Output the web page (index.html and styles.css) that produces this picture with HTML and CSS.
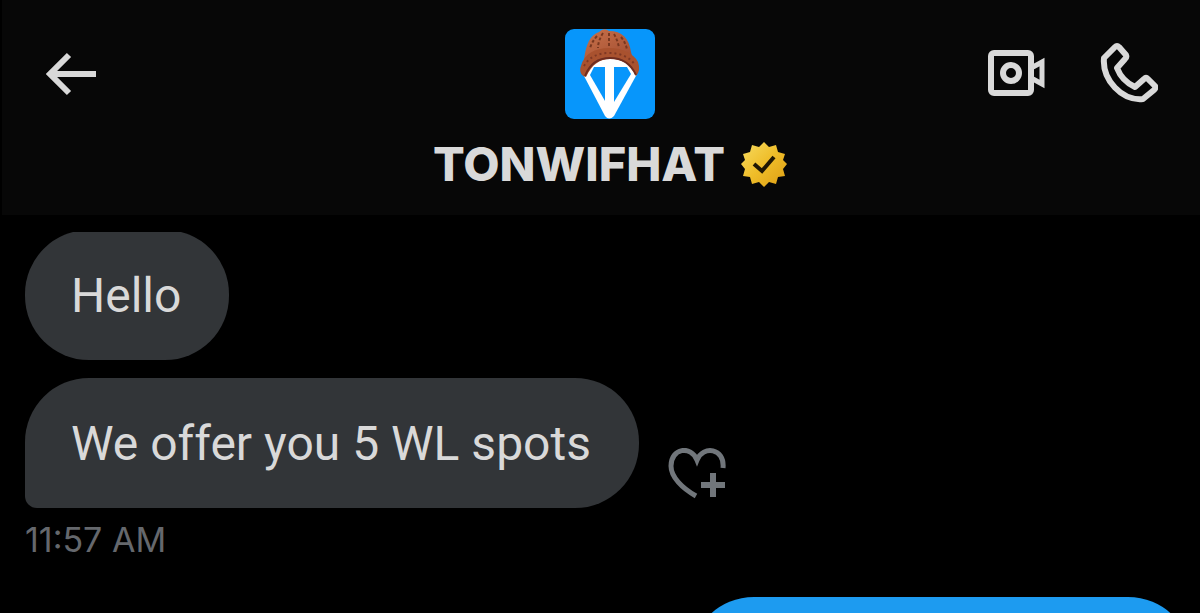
FILE: index.html
```html
<!DOCTYPE html>
<html lang="en">
<head>
  <meta charset="UTF-8">
  <meta name="viewport" content="width=device-width, initial-scale=1">
  <title>TONWIFHAT</title>
  <link rel="stylesheet" href="styles.css">
</head>
<body>
  <!-- Top bar -->
  <header class="topbar">
    <button class="icon-btn back" type="button" aria-label="Back">
      <svg width="52" height="44" viewBox="0 0 52 44" fill="none" stroke="currentColor" stroke-width="6">
        <path d="M23 3 4 22l19 19M4 22h46"/>
      </svg>
    </button>

    <div class="profile">
      <svg class="avatar" width="92" height="92" viewBox="0 0 92 92" aria-hidden="true">
        <defs>
          <linearGradient id="wool" x1="0" y1="0" x2="1" y2="1">
            <stop offset="0" stop-color="#c9724b"/>
            <stop offset="1" stop-color="#a14c30"/>
          </linearGradient>
        </defs>
        <rect x="1" y="1" width="90" height="90" rx="9" fill="#0796fb"/>
        <path d="M20 48C24 22 66 22 73 46L50 88q-5 5-9 0Z" fill="#fff"/>
        <path d="M30 39h11v34L26 47Z" fill="#0796fb"/>
        <path d="M50 39h13l4 7-17 28Z" fill="#0796fb"/>
        <path d="M20 32C22 16 26 7 35 4q5-5 10-1c13 0 20 7 22 21l2 8Q46 24 20 32Z" fill="url(#wool)"/>
        <path d="M33 8q-6 7-7 13M39 5q-5 8-5 15M45 5v14M50 6q4 7 5 14M57 9q5 6 6 13" fill="none" stroke="#78371f" stroke-width="2" stroke-dasharray="3 2"/>
        <path d="M17 38c3-12 14-18 28-18s25 6 29 14q3 9-2 14C66 34 56 31 46 31S28 36 22 49c-5-1-7-6-5-11Z" fill="#a9522f"/>
        <path d="M20 38c5-9 14-13 25-13s21 4 26 12" fill="none" stroke="#7f3824" stroke-width="2" stroke-dasharray="2 3"/>
        <path d="M21 48c5-13 14-18 25-18s20 4 26 17" fill="none" stroke="#6f2d20" stroke-width="2"/>
      </svg>
      <h1 class="name">
        TONWIFHAT
        <svg width="46" height="46" viewBox="0 0 46 46" role="img" aria-label="Verified">
          <defs>
            <linearGradient id="gold" x1="0" y1="0" x2="1" y2="1">
              <stop offset="0" stop-color="#f6dc62"/>
              <stop offset=".5" stop-color="#efbd29"/>
              <stop offset="1" stop-color="#dc9d13"/>
            </linearGradient>
          </defs>
          <path d="m23 1 5 5 7-2 2 7 7 2-2 6 4 4-4 5 2 7-7 1-2 7-7-2-5 5-5-5-7 2-2-7-7-1 2-7-4-5 4-4-2-6 7-2 2-7 7 2Z" fill="url(#gold)"/>
          <path d="m13 23 8 7 12-14" fill="none" stroke="#201704" stroke-width="4"/>
        </svg>
      </h1>
    </div>

    <div class="calls">
      <button class="icon-btn" type="button" aria-label="Video call">
        <svg width="58" height="46" viewBox="0 0 58 46" fill="none" stroke="currentColor" stroke-width="6">
          <rect x="3" y="3" width="40" height="40" rx="3"/>
          <circle cx="23" cy="23" r="8"/>
          <path d="M45 17 54 12v22l-9-5" stroke-width="5"/>
        </svg>
      </button>
      <button class="icon-btn" type="button" aria-label="Audio call">
        <svg width="58" height="60" viewBox="0 0 58 60" fill="none" stroke="currentColor" stroke-width="6" stroke-linejoin="round">
          <path d="M4 15 15 4q2-2 4 0l7 8q1 2-1 4l-8 9q5 13 18 19l9-8q2-2 4 0l7 7q1 2-1 4L43 56C22 58 2 37 4 15Z"/>
        </svg>
      </button>
    </div>
  </header>

  <!-- Conversation -->
  <main class="messages">
    <div class="row">
      <p class="bubble">Hello</p>
    </div>
    <div class="row">
      <p class="bubble last">We offer you 5 WL spots</p>
      <button class="icon-btn react" type="button" aria-label="Add reaction">
        <svg width="60" height="52" viewBox="0 0 60 52" fill="none" stroke="currentColor" stroke-width="5">
          <path d="M29 48C15 40 4 29 4 18 4 0 24-3 30 12 36-3 58 0 56 20"/>
          <path d="M34 37h24M46 25v24" stroke-width="6"/>
        </svg>
      </button>
    </div>
    <time class="time">11:57 AM</time>
    <div class="bubble sent"></div>
  </main>
</body>
</html>
```

FILE: styles.css
```css
* {
  box-sizing: border-box;
}
body {
  margin: 0;
  height: 100vh;
  display: flex;
  flex-direction: column;
  overflow: hidden;
  background: #000;
  color: #d9d9d9;
  font-family: Inter, "Liberation Sans", sans-serif;
}
/* Top bar */
.topbar {
  display: grid;
  grid-template-columns: 1fr auto 1fr;
  align-items: start;
  padding: 28px 26px 23px 44px;
  border-left: 2px solid #000;
  background: #070707;
}
.icon-btn {
  padding: 0;
  border: none;
  background: none;
  color: inherit;
  cursor: pointer;
}
.icon-btn svg {
  display: block;
}
.back {
  justify-self: start;
  margin-top: 24px;
}
.profile {
  display: flex;
  flex-direction: column;
  align-items: center;
  gap: 16px;
}
.avatar {
  display: block;
}
.name {
  display: flex;
  align-items: center;
  gap: 16px;
  margin: 0;
  font-size: 47px;
  font-weight: 800;
  line-height: 56px;
}
.calls {
  display: flex;
  align-items: center;
  justify-self: end;
  gap: 54px;
  margin-top: 15px;
  margin-right: 16px;
}
/* Conversation */
.messages {
  flex: 1;
  display: flex;
  flex-direction: column;
  margin-top: 17px;
  padding: 0 8px 0 25px;
  overflow: hidden;
}
.row {
  display: flex;
  align-items: flex-end;
  gap: 28px;
  margin-bottom: 18px;
}
.row:first-child {
  margin-top: -2px;
}
.bubble {
  margin: 0;
  padding: 36px 48px 34px 46px;
  border-radius: 64px;
  background: #323538;
  font-family: Roboto, "Liberation Sans", sans-serif;
  font-size: 48px;
  line-height: 60px;
}
.bubble.last {
  border-bottom-left-radius: 12px;
}
.react {
  margin-bottom: 8px;
  color: #71767b;
}
.time {
  margin-top: -8px;
  color: #65686d;
  font-size: 34px;
  line-height: 44px;
}
.bubble.sent {
  flex: none;
  align-self: flex-end;
  width: 43%;
  height: 130px;
  margin-top: 35px;
  background: #1d9bf0;
}
```
